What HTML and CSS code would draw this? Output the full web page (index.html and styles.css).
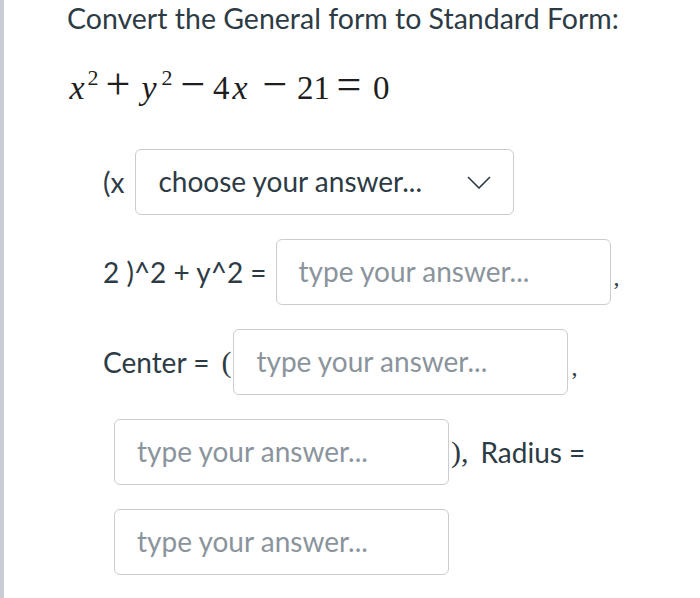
FILE: index.html
```html
<!DOCTYPE html>
<html>
<head>
<meta charset="utf-8">
<link rel="stylesheet" href="styles.css">
</head>
<body>
<div class="page">
  <h1 class="title">Convert the General form to Standard Form:</h1>
  <div class="equation"><span class="c v w20">x</span><span class="c sp w12">2</span><span class="c op w38">+</span><span class="c v w24">y</span><span class="c sp w12">2</span><span class="c op w40">−</span><span class="c w14">4</span><span class="c v w26">x</span><span class="c op w44">−</span><span class="c w28">21</span><span class="c op w48">=</span><span class="c w16">0</span></div>
  <div class="rows">
    <div class="row">
      <span class="label">(x</span>
      <div class="box select">
        <span class="chosen">choose your answer...</span>
        <svg class="chev" width="24" height="13" viewBox="0 0 24 13"><path d="M1 1 L12 12 L23 1" fill="none" stroke="#2d3b45" stroke-width="1.6"/></svg>
      </div>
    </div>
    <div class="row">
      <span class="label">2 )^2 + y^2 =</span>
      <div class="box input near"><span class="ph">type your answer...</span></div>
      <span class="serif comma">,</span>
    </div>
    <div class="row">
      <span class="label">Center =</span>
      <span class="serif paren">(</span>
      <div class="box input tight"><span class="ph">type your answer...</span></div>
      <span class="serif comma">,</span>
    </div>
    <div class="row indent">
      <div class="box input"><span class="ph">type your answer...</span></div>
      <span class="serif paren close">),</span>
      <span class="label">Radius =</span>
    </div>
    <div class="row indent">
      <div class="box input"><span class="ph">type your answer...</span></div>
    </div>
  </div>
</div>
</body>
</html>
```
FILE: styles.css
```css
html, body {
  margin: 0;
  padding: 0;
  background: #ffffff;
}
body {
  border-left: 4px solid #c9ccd3;
  min-height: 598px;
  box-sizing: border-box;
}
.page {
  padding: 0 0 0 63px;
  font-family: Lato, "Liberation Sans", sans-serif;
  color: #2d3b45;
}
.title {
  margin: 0;
  padding-top: 1px;
  font-size: 28.5px;
  font-weight: 400;
  line-height: 34px;
  letter-spacing: 0;
  white-space: nowrap;
}
.equation {
  margin-top: 36px;
  height: 34px;
  font-family: "Liberation Serif", "Times New Roman", serif;
  font-size: 33px;
  line-height: 34px;
  color: #1e1e1e;
  white-space: nowrap;
}
.equation .c {
  display: inline-block;
  text-align: center;
}
.equation .v {
  font-style: italic;
  font-size: 34px;
  line-height: 20px;
}
.equation .op {
  font-size: 44px;
  line-height: 20px;
}
.equation .sp {
  font-size: 22px;
  line-height: 0;
  vertical-align: 14px;
}
.w12 { width: 12px; }
.w14 { width: 14px; }
.w16 { width: 16px; }
.w20 { width: 20px; }
.w24 { width: 24px; }
.w26 { width: 26px; }
.w28 { width: 28px; }
.w38 { width: 38px; }
.w40 { width: 40px; }
.w44 { width: 44px; }
.w48 { width: 48px; }
.rows {
  margin-top: 44px;
  padding-left: 36px;
  display: flex;
  flex-direction: column;
  gap: 24px;
}
.row {
  display: flex;
  align-items: center;
  height: 66px;
}
.row.indent {
  padding-left: 11px;
}
.label {
  font-size: 28px;
  white-space: pre;
}
.box {
  box-sizing: border-box;
  height: 66px;
  border: 1.5px solid #c9cdd1;
  border-radius: 6px;
  margin-left: 11px;
  display: flex;
  align-items: center;
  background: #fff;
}
.row.indent .box {
  margin-left: 0;
}
.box.near {
  margin-left: 9px;
}
.box.tight {
  margin-left: 2px;
}
.select {
  width: 379px;
  padding: 0 22px;
  justify-content: space-between;
}
.chosen {
  font-size: 28px;
  color: #2d3b45;
  margin-top: -2px;
}
.input {
  width: 335px;
  padding-left: 22px;
}
.ph {
  font-size: 28px;
  color: #8a949c;
  margin-top: -2px;
}
.serif {
  font-family: "Liberation Serif", "Times New Roman", serif;
  color: #2d3b45;
}
.comma {
  font-size: 24px;
  margin-top: 10px;
  margin-left: 3px;
}
.paren {
  font-size: 30px;
  margin-left: 12px;
}
.paren.close {
  margin-left: 2px;
  margin-right: 12px;
}
```
